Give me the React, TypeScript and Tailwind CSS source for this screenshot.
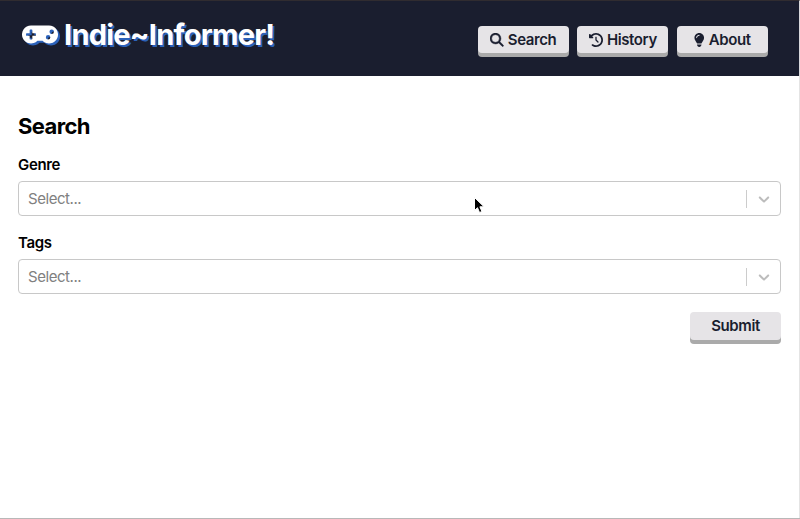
import type { ReactNode } from "react";
import { FaGamepad } from "react-icons/fa";
import { FaClockRotateLeft, FaLightbulb, FaMagnifyingGlass } from "react-icons/fa6";

const buttonStyle =
  "flex h-[27.5px] w-[91px] items-center justify-center rounded-[4px] bg-[#e6e4e7] pt-px text-[15px] font-semibold tracking-[-0.4px] text-[#1a1e2f] shadow-[0_4px_0_#aaaaaa]";

function NavButton({ icon, label }: { icon: ReactNode; label: string }) {
  return (
    <button className={buttonStyle}>
      {icon}
      <span className="ml-[4px]">{label}</span>
    </button>
  );
}

function SelectField({ label }: { label: string }) {
  return (
    <div className="mb-[17px]">
      <div className="mb-[6px] h-[20px] text-[15px] leading-[20px] font-semibold tracking-[-0.35px] text-black">{label}</div>
      <div className="flex h-[35px] items-center rounded-[4px] border border-[#c8c8c8] bg-white">
        <span className="flex-1 pt-px pl-[9px] text-[15px] leading-[20px] tracking-[-0.45px] text-[#808080]">Select...</span>
        <span className="h-[18px] w-px bg-[#cccccc]" />
        <span className="flex w-[33px] justify-center">
          <svg width="18" height="18" viewBox="0 0 20 20" className="fill-[#bcbcbc]">
            <path d="M4.516 7.548c0.436-0.446 1.043-0.481 1.576 0l3.908 3.747 3.908-3.747c0.533-0.481 1.141-0.446 1.574 0 0.436 0.445 0.408 1.197 0 1.615-0.406 0.418-4.695 4.502-4.695 4.502-0.217 0.223-0.502 0.335-0.787 0.335s-0.57-0.112-0.789-0.335c0 0-4.287-4.084-4.695-4.502s-0.436-1.17 0-1.615z" />
          </svg>
        </span>
      </div>
    </div>
  );
}

export default function App() {
  return (
    <div className="relative flex h-[519px] w-[800px] flex-col overflow-hidden border-b border-[#b8b8b8] bg-white font-['Inter',sans-serif]">
      <header className="flex h-[76px] shrink-0 items-start justify-between border-t border-r border-t-[#302c30] border-r-[#d8d8dc] bg-[#1a1e2f] pr-[31px] pl-[22px]">
        <div className="mt-[14px] flex h-[40px] items-center text-white">
          <FaGamepad className="-mt-[2px] h-[29px] w-[36px] drop-shadow-[2px_2px_0_#2c62ba]" />
          <span className="ml-[6px] text-[29px] font-bold tracking-[-0.75px] text-shadow-[2px_2px_0_#2c62ba]">Indie~Informer!</span>
        </div>
        <nav className="mt-[24.7px] flex gap-[8.6px]">
          <NavButton icon={<FaMagnifyingGlass className="size-[13.5px] [stroke-width:16]" />} label="Search" />
          <NavButton icon={<FaClockRotateLeft className="size-[14px]" />} label="History" />
          <NavButton icon={<FaLightbulb className="h-[14px] w-[10.5px]" />} label="About" />
        </nav>
      </header>
      <main className="flex-1 border-r border-[#e4e4e4] pt-[35px] pr-[18px] pl-[18px]">
        <h1 className="mb-[14px] h-[30px] text-[22px] leading-[30px] font-bold tracking-[-0.6px] text-black">Search</h1>
        <SelectField label="Genre" />
        <SelectField label="Tags" />
        <div className="flex justify-end pt-[1px]">
          <button className={buttonStyle}>Submit</button>
        </div>
      </main>
      <svg className="absolute top-[196px] left-[473px]" width="13" height="19" viewBox="0 0 13 19">
        <path d="M1.5 1.5v13l3-2.8 2 4.8 2.4-1-2-4.7h4.2z" fill="#000" stroke="#fff" strokeWidth="1" />
      </svg>
    </div>
  );
}
